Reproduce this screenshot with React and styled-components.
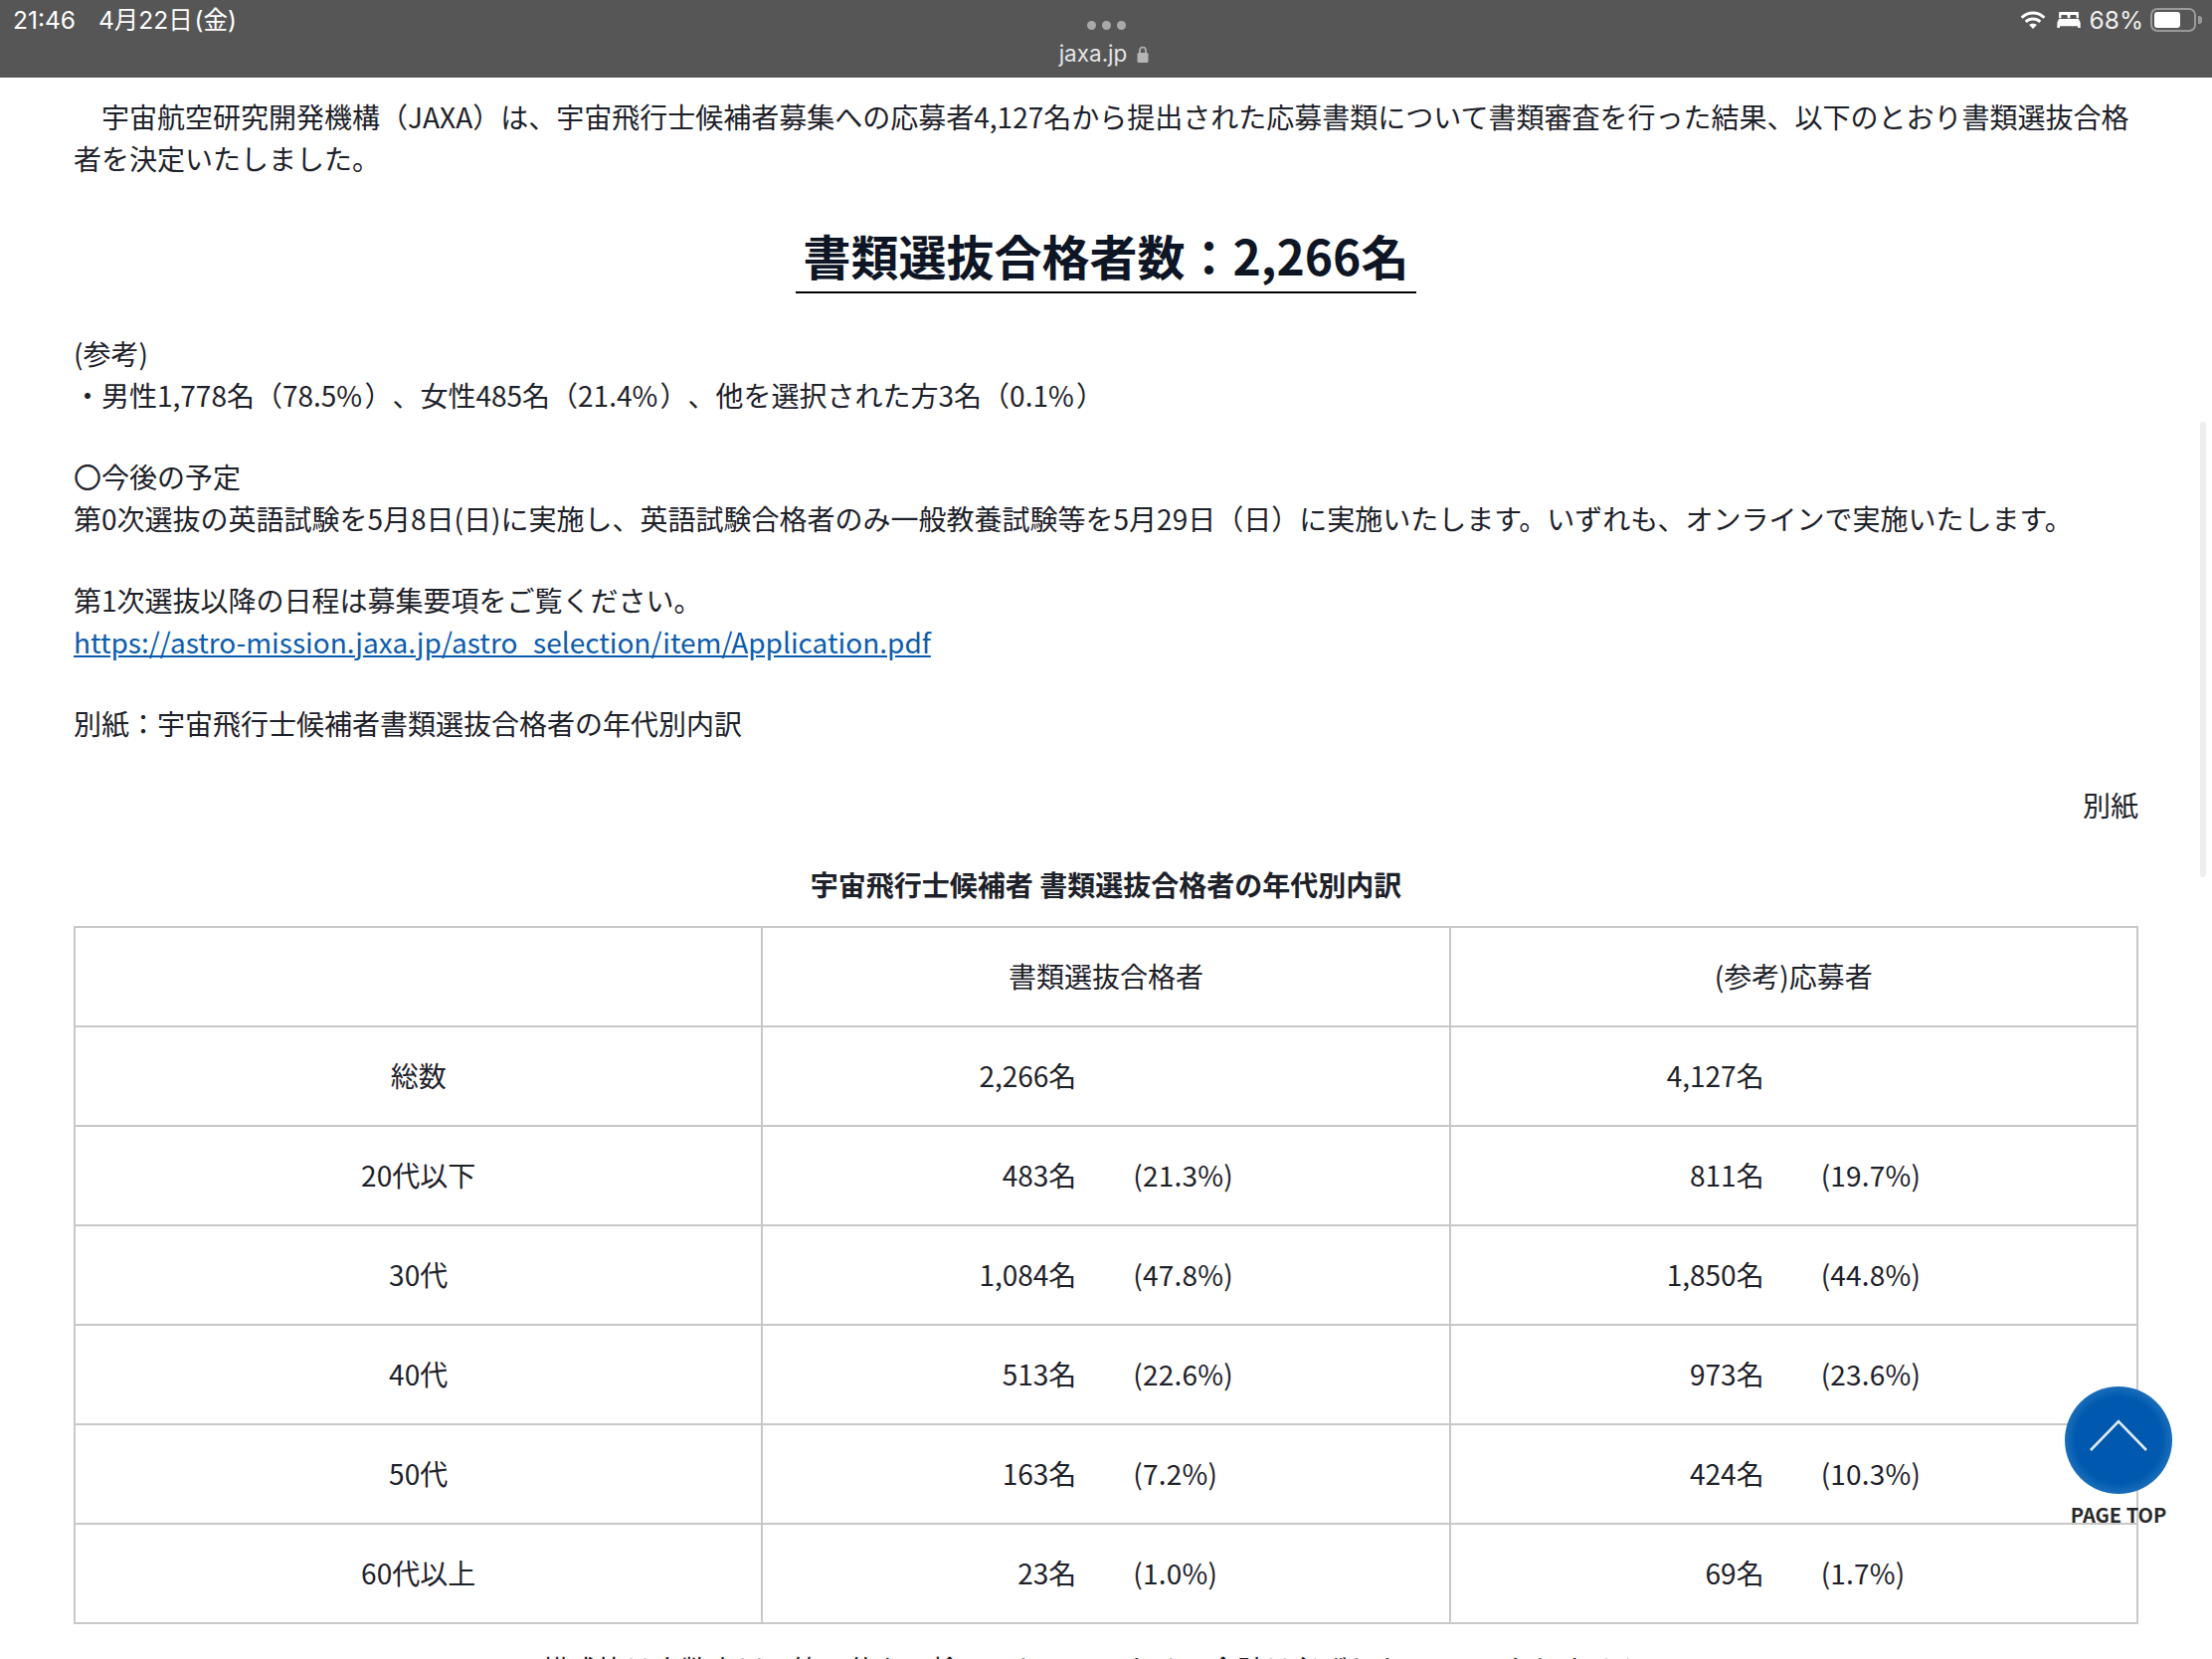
import styled, { createGlobalStyle } from "styled-components";

const GlobalStyle = createGlobalStyle`
  html, body { margin: 0; padding: 0; background: #fff; }
  body {
    font-family: "Noto Sans CJK JP", "Noto Sans", sans-serif;
    text-spacing-trim: space-all;
  }
`;

const Screen = styled.div`
  position: relative;
  width: 2224px;
  height: 1668px;
  overflow: hidden;
  background: #fff;
  color: #1d2129;
`;

const StatusBar = styled.header`
  position: relative;
  height: 78px;
  background: #565656;
  color: #fff;
  font-family: "Inter", "Noto Sans CJK JP", sans-serif;
`;

const Clock = styled.div`
  display: flex;
  gap: 23px;
  padding: 7px 0 0 13px;
  font-size: 24.5px;
  line-height: 26px;
`;

const ClockDate = styled.span`
  word-spacing: -5px;
`;

const Center = styled.div`
  position: absolute;
  left: 0;
  right: 0;
  top: 21px;
  display: flex;
  flex-direction: column;
  align-items: center;
`;

const Dots = styled.div`
  display: flex;
  gap: 6px;
  height: 12px;
`;

const Dot = styled.span`
  width: 9px;
  height: 9px;
  border-radius: 50%;
  background: #a9a9a9;
`;

const Domain = styled.div`
  display: flex;
  align-items: center;
  gap: 10px;
  margin-top: 7px;
  margin-left: -4px;
  font-size: 22.5px;
  line-height: 28px;
  color: #e4e4e4;
`;

const StatusRight = styled.div`
  position: absolute;
  top: 6px;
  right: 10px;
  display: flex;
  align-items: center;
  height: 28px;
  gap: 11px;
  font-size: 24.5px;
  color: #f0f0f0;
`;

const BatteryLevel = styled.span`
  margin-left: -2px;
`;

const Battery = styled.div`
  display: flex;
  align-items: center;
  gap: 2px;
  margin-left: -4px;
`;

const BatteryBody = styled.div`
  box-sizing: border-box;
  width: 46px;
  height: 24px;
  padding: 2px;
  border: 2px solid #9a9a9a;
  border-radius: 7px;
`;

const BatteryFill = styled.div`
  height: 100%;
  background: #fff;
  border-radius: 3px;
`;

const BatteryCap = styled.div`
  width: 4px;
  height: 8px;
  background: #9a9a9a;
  border-radius: 0 3px 3px 0;
`;

const Content = styled.main`
  padding: 18px 74px 0;
  font-size: 28px;
  line-height: 42px;
`;

const Para = styled.p`
  margin: 0 0 ${(p) => p.$after || 0}px;
  text-indent: ${(p) => (p.$indent ? "28px" : 0)};
  text-align: ${(p) => p.$align || "left"};
`;

const Pct = styled.span`
  letter-spacing: 2.3px;
`;

const HeadingWrap = styled.div`
  display: flex;
  justify-content: center;
  margin: 39px 0 39px;
`;

const Heading = styled.h2`
  margin: 0;
  width: 624px;
  text-align: center;
  font-size: 48px;
  line-height: 74px;
  font-weight: 700;
  color: #0e1524;
  border-bottom: 2px solid #000;
`;

const DocLink = styled.a`
  color: #0b5cad;
  text-decoration: underline;
`;

const TableTitle = styled.h3`
  margin: 38px 0 21px;
  text-align: center;
  font-size: 28px;
  line-height: 42px;
  font-weight: 700;
`;

const Table = styled.table`
  width: 2076px;
  border-collapse: collapse;
  table-layout: fixed;
  border: 2px solid #c8c8c8;
`;

const Cell = styled.td`
  height: 100px;
  padding: 0 0 2px;
  box-sizing: border-box;
  border: 2px solid #c8c8c8;
  text-align: center;
`;

const Figures = styled.div`
  display: grid;
  grid-template-columns: 315px 1fr;
  column-gap: 57px;
  text-align: left;
`;

const Count = styled.span`
  text-align: right;
`;

const Share = styled.span`
  letter-spacing: 0.2px;
`;

const Note = styled.p`
  margin: 24px 0 0;
  text-align: center;
`;

const ScrollThumb = styled.div`
  position: absolute;
  top: 424px;
  right: 6px;
  width: 6px;
  height: 458px;
  border-radius: 3px;
  background: #eeeeee;
`;

const PageTop = styled.a`
  position: absolute;
  top: 1394px;
  left: 2076px;
  width: 108px;
  display: flex;
  flex-direction: column;
  align-items: center;
`;

const TopCircle = styled.div`
  display: flex;
  align-items: center;
  justify-content: center;
  box-sizing: border-box;
  width: 108px;
  height: 108px;
  padding-bottom: 10px;
  border-radius: 50%;
  background: radial-gradient(circle closest-side, #0059ae 0%, #0059ae 80%, #1a6dba 100%);
`;

const TopLabel = styled.span`
  margin-top: 7px;
  font-size: 20px;
  line-height: 28px;
  font-weight: 700;
  color: #2a2a2a;
  white-space: nowrap;
`;

const rows = [
  ["20代以下", "483名", "(21.3%)", "811名", "(19.7%)"],
  ["30代", "1,084名", "(47.8%)", "1,850名", "(44.8%)"],
  ["40代", "513名", "(22.6%)", "973名", "(23.6%)"],
  ["50代", "163名", "(7.2%)", "424名", "(10.3%)"],
  ["60代以上", "23名", "(1.0%)", "69名", "(1.7%)"],
];

const Figure = ({ count, share }) => (
  <Figures>
    <Count>{count}</Count>
    <Share>{share}</Share>
  </Figures>
);

const App = () => (
  <Screen>
    <GlobalStyle />
    <StatusBar>
      <Clock>
        <span>21:46</span>
        <ClockDate>4月22日 (金)</ClockDate>
      </Clock>
      <Center>
        <Dots>
          <Dot />
          <Dot />
          <Dot />
        </Dots>
        <Domain>
          jaxa.jp
          <svg width="12" height="17" viewBox="0 0 12 17">
            <path d="M3 7V4.500a3 3 0 0 1 6 0V7" fill="none" stroke="#b5b5b5" strokeWidth="1.6" />
            <rect x="0.5" y="7" width="11" height="10" rx="1.5" fill="#b5b5b5" />
          </svg>
        </Domain>
      </Center>
      <StatusRight>
        <svg width="26" height="20" viewBox="0 0 28 22" fill="none" stroke="#fff" strokeWidth="3.2">
          <path d="M1.5 8.500C8.500 1.500 19.500 1.500 26.500 8.500" />
          <path d="M6 13c4.500-4.200 11.500-4.200 16 0" />
          <path d="M14 21l-4.300-4.500c2.400-2 6.200-2 8.600 0z" fill="#fff" stroke="none" />
        </svg>
        <svg width="24" height="18" viewBox="0 0 26 20">
          <path d="M3 1h20a1 1 0 0 1 1 1v6h-2.500V5.500a1 1 0 0 0-1-1h-5a1 1 0 0 0-1 1V8h-3V5.500a1 1 0 0 0-1-1h-5a1 1 0 0 0-1 1V8H2V2a1 1 0 0 1 1-1z" fill="#fff" />
          <path d="M2 9h22l2 4v6h-3v-2H3v2H0v-6z" fill="#fff" />
        </svg>
        <BatteryLevel>68%</BatteryLevel>
        <Battery>
          <BatteryBody>
            <BatteryFill style={{ width: "68%" }} />
          </BatteryBody>
          <BatteryCap />
        </Battery>
      </StatusRight>
    </StatusBar>
    <Content>
      <Para $indent>
        宇宙航空研究開発機構（JAXA）は、宇宙飛行士候補者募集への応募者4,127名から提出された応募書類について書類審査を行った結果、以下のとおり書類選抜合格者を決定いたしました。
      </Para>
      <HeadingWrap>
        <Heading>書類選抜合格者数：2,266名</Heading>
      </HeadingWrap>
      <Para>(参考)</Para>
      <Para $after={40}>
        ・男性1,778名（78.5<Pct>%</Pct>）、女性485名（21.4<Pct>%</Pct>）、他を選択された方3名（0.1<Pct>%</Pct>）
      </Para>
      <Para>〇今後の予定</Para>
      <Para $after={40}>
        第0次選抜の英語試験を5月8日(日)に実施し、英語試験合格者のみ一般教養試験等を5月29日（日）に実施いたします。いずれも、オンラインで実施いたします。
      </Para>
      <Para>第1次選抜以降の日程は募集要項をご覧ください。</Para>
      <Para $after={40}>
        <DocLink href="#">https://astro-mission.jaxa.jp/astro_selection/item/Application.pdf</DocLink>
      </Para>
      <Para $after={40}>別紙：宇宙飛行士候補者書類選抜合格者の年代別内訳</Para>
      <Para $align="right">別紙</Para>
      <TableTitle>宇宙飛行士候補者 書類選抜合格者の年代別内訳</TableTitle>
      <Table>
        <tbody>
          <tr>
            <Cell />
            <Cell>書類選抜合格者</Cell>
            <Cell>(参考)応募者</Cell>
          </tr>
          <tr>
            <Cell>総数</Cell>
            <Cell>
              <Figure count="2,266名" />
            </Cell>
            <Cell>
              <Figure count="4,127名" />
            </Cell>
          </tr>
          {rows.map((row) => (
            <tr key={row[0]}>
              <Cell>{row[0]}</Cell>
              <Cell>
                <Figure count={row[1]} share={row[2]} />
              </Cell>
              <Cell>
                <Figure count={row[3]} share={row[4]} />
              </Cell>
            </tr>
          ))}
        </tbody>
      </Table>
      <Note>構成比は小数点以下第二位を四捨五入しているため、合計は必ずしも100%になりません。</Note>
    </Content>
    <ScrollThumb />
    <PageTop>
      <TopCircle>
        <svg width="60" height="34" viewBox="0 0 60 34" fill="none" stroke="#dfe9f5" strokeWidth="2.6">
          <path d="M2 32L30 3L58 32" />
        </svg>
      </TopCircle>
      <TopLabel>PAGE TOP</TopLabel>
    </PageTop>
  </Screen>
);

export default App;
